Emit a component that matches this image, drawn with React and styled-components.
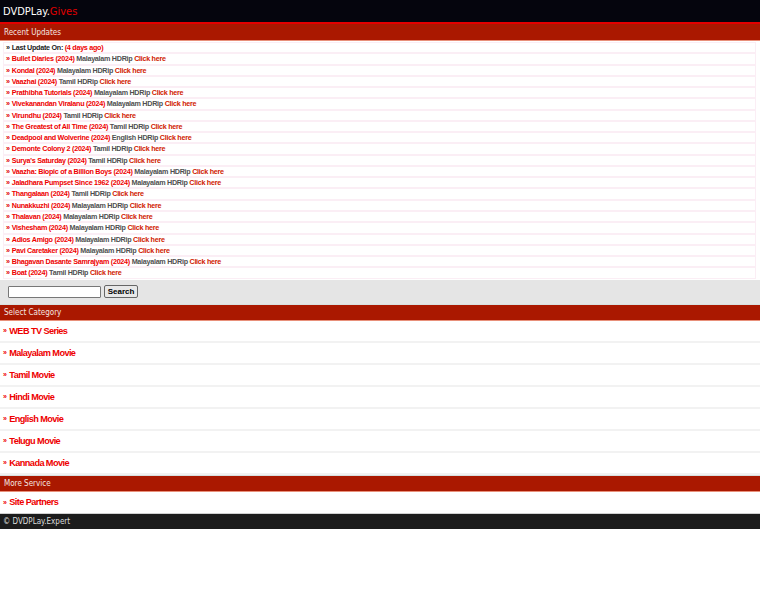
import React from "react";
import styled, { createGlobalStyle } from "styled-components";

const Global = createGlobalStyle`
  html, body { margin: 0; padding: 0; background: #fff; }
  body { font-family: "Liberation Sans", Arial, sans-serif; }
`;

const Header = styled.div`
  height: 22px;
  background: #05050d;
  display: flex;
  align-items: center;
  padding-left: 3px;
  font-family: "DejaVu Sans Condensed", "DejaVu Sans", sans-serif;
  font-size: 11px;
  color: #fff;
`;
const Red = styled.span`color: #e00000;`;

const TitleBar = styled.div`
  background: #aa1800;
  border-top: ${p => (p.$first ? "2px solid #e40000" : "1px solid #d8e0e0")};
  border-bottom: 1px solid #e8907a;
  height: ${p => (p.$first ? 16 : 15)}px;
  display: flex;
  align-items: center;
  padding-left: 4px;
  font-family: "DejaVu Sans Condensed", "DejaVu Sans", sans-serif;
  font-size: 8px;
  color: #f4e6e0;
`;

const List = styled.div`
  padding: 1px 4px 1px 3px;
`;
const Row = styled.div`
  border: 1px solid #fbeef5;
  height: 9.27px;
  line-height: 9.27px;
  padding-left: 2px;
  font-size: 7.2px;
  letter-spacing: -0.28px;
  font-weight: bold;
  white-space: nowrap;
  overflow: hidden;
`;
const Bullet = styled.span`color: ${p => (p.$dark ? "#222" : "#e00000")}; margin-right: 2px;`;
const Title = styled.span`color: #ee0000;`;
const Meta = styled.span`color: #505050;`;
const Link = styled.span`color: #d02000;`;
const Dark = styled.span`color: #222;`;

const SearchBar = styled.div`
  background: #e5e5e5;
  height: 24px;
  display: flex;
  align-items: center;
  gap: 3px;
  padding-left: 8px;
`;
const Input = styled.input`
  width: 89px;
  height: 8px;
  border: 1px solid #777;
  border-radius: 1px;
  padding: 1px;
  background: #fff;
  font-size: 8px;
`;
const Button = styled.button`
  width: 34px;
  height: 13px;
  font-size: 8px;
  font-weight: bold;
  font-family: "Liberation Sans", Arial, sans-serif;
  padding: 0;
  border: 1px solid #666;
  border-radius: 2px;
  background: #e8e8e8;
  color: #000;
`;

const CatItem = styled.div`
  height: ${p => (p.$last ? 21 : 20)}px;
  border-bottom: ${p => (p.$last ? "none" : "2px solid #f2f2f2")};
  display: flex;
  align-items: center;
  padding-left: 3px;
  font-size: 9.2px;
  letter-spacing: -0.6px;
  font-weight: bold;
  color: #ee0000;
`;
const Arrow = styled.span`
  font-size: 7px;
  margin-right: 3px;
`;

const Footer = styled.div`
  border-top: 1px solid #d0d0d0;
  background: #1c1c1c;
  height: 15px;
  display: flex;
  align-items: center;
  padding-left: 3px;
  font-family: "DejaVu Sans Condensed", "DejaVu Sans", sans-serif;
  font-size: 8px;
  color: #ddd;
`;

const updates = [
  ["Bullet Diaries (2024)", "Malayalam HDRip"],
  ["Kondal (2024)", "Malayalam HDRip"],
  ["Vaazhai (2024)", "Tamil HDRip"],
  ["Prathibha Tutorials (2024)", "Malayalam HDRip"],
  ["Vivekanandan Viralanu (2024)", "Malayalam HDRip"],
  ["Virundhu (2024)", "Tamil HDRip"],
  ["The Greatest of All Time (2024)", "Tamil HDRip"],
  ["Deadpool and Wolverine (2024)", "English HDRip"],
  ["Demonte Colony 2 (2024)", "Tamil HDRip"],
  ["Surya's Saturday (2024)", "Tamil HDRip"],
  ["Vaazha: Biopic of a Billion Boys (2024)", "Malayalam HDRip"],
  ["Jaladhara Pumpset Since 1962 (2024)", "Malayalam HDRip"],
  ["Thangalaan (2024)", "Tamil HDRip"],
  ["Nunakkuzhi (2024)", "Malayalam HDRip"],
  ["Thalavan (2024)", "Malayalam HDRip"],
  ["Vishesham (2024)", "Malayalam HDRip"],
  ["Adios Amigo (2024)", "Malayalam HDRip"],
  ["Pavi Caretaker (2024)", "Malayalam HDRip"],
  ["Bhagavan Dasante Samrajyam (2024)", "Malayalam HDRip"],
  ["Boat (2024)", "Tamil HDRip"],
];

const cats = ["WEB TV Series", "Malayalam Movie", "Tamil Movie", "Hindi Movie", "English Movie", "Telugu Movie", "Kannada Movie"];

export default function App() {
  return (
    <>
      <Global />
      <Header>DVDPLay.<Red>Gives</Red></Header>
      <TitleBar $first>Recent Updates</TitleBar>
      <List>
        <Row><Bullet $dark>»</Bullet><Dark>Last Update On: </Dark><Title>(4 days ago)</Title></Row>
        {updates.map(([t, m]) => (
          <Row key={t}><Bullet>»</Bullet><Title>{t}</Title> <Meta>{m}</Meta> <Link>Click here</Link></Row>
        ))}
      </List>
      <SearchBar>
        <Input type="text" />
        <Button>Search</Button>
      </SearchBar>
      <TitleBar>Select Category</TitleBar>
      {cats.map(c => <CatItem key={c}><Arrow>»</Arrow>{c}</CatItem>)}
      <TitleBar>More Service</TitleBar>
      <CatItem $last><Arrow>»</Arrow>Site Partners</CatItem>
      <Footer>© DVDPLay.Expert</Footer>
    </>
  );
}
